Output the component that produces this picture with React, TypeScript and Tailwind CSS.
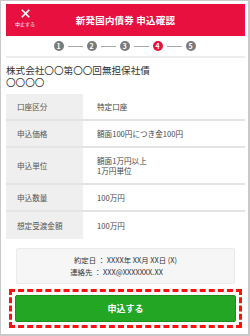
import React from 'react';

const rows: { label: string; value: string[]; tall?: boolean }[] = [
  { label: '口座区分', value: ['特定口座'] },
  { label: '申込価格', value: ['額面100円につき金100円'] },
  { label: '申込単位', value: ['額面1万円以上', '1万円単位'], tall: true },
  { label: '申込数量', value: ['100万円'] },
  { label: '想定受渡金額', value: ['100万円'] },
];

const steps = [1, 2, 3, 4, 5];

export default function App() {
  return (
    <div
      className="w-[250px] h-[336px] bg-white border-l border-t border-r-2 border-b-2 border-[#c9c9c9] pl-[5px] pr-[3px] pt-[3px] overflow-hidden"
      style={{ fontFamily: '"Noto Sans CJK JP", "Noto Sans", sans-serif' }}
    >
      {/* header */}
      <div className="relative h-[32px] bg-[#e8103f] flex items-center justify-center">
        <div className="absolute left-[9px] top-[5px] w-[20px] flex flex-col items-center text-white">
          <svg width="9" height="9" viewBox="0 0 10 10" className="block">
            <path d="M1.5 1.5 L8.5 8.5 M8.5 1.5 L1.5 8.5" stroke="white" strokeWidth="1.8" strokeLinecap="square" />
          </svg>
          <span className="mt-[3px] text-[5px] leading-[6px] whitespace-nowrap">中止する</span>
        </div>
        <span className="text-white text-[9.5px] font-bold tracking-[0.2px]">新発国内債券 申込確認</span>
      </div>

      {/* steps */}
      <div className="h-[20px] flex items-center justify-center pr-[2px]">
        {steps.map((n, i) => (
          <React.Fragment key={n}>
            {i > 0 && <div className="w-[15px] h-px bg-[#a8a8a8] mx-[4px]" />}
            <div
              className={`w-[10px] h-[10px] rounded-full flex items-center justify-center text-white text-[7px] font-bold leading-none ${
                n === 4 ? 'bg-[#e8103f]' : 'bg-[#7a7a7a]'
              }`}
            >
              {n}
            </div>
          </React.Fragment>
        ))}
      </div>
      <div className="h-[2px] bg-[#eeeeee]" />

      {/* title */}
      <div className="pt-[6px] pb-[6px] text-[#333] text-[9.6px] leading-[12px]">
        <div>株式会社〇〇第〇〇回無担保社債</div>
        <div>〇〇〇〇</div>
      </div>

      {/* table */}
      <div className="flex flex-col">
        {rows.map((r, i) => (
          <div
            key={r.label}
            className={`flex ${r.tall ? 'h-[37px]' : 'h-[27px]'} ${i < rows.length - 1 ? 'border-b-2 border-[#e4e4e4]' : ''}`}
          >
            <div className="w-[77px] bg-[#efefef] flex items-center pl-[11px] text-[7.6px] text-[#555]">{r.label}</div>
            <div className="flex-1 flex flex-col justify-center pl-[14px] text-[7.6px] leading-[10px] text-[#444]">
              {r.value.map((v) => (
                <div key={v}>{v}</div>
              ))}
            </div>
          </div>
        ))}
      </div>

      {/* info box */}
      <div className="mt-[9px] mx-[10px] h-[36px] bg-[#f6f6f6] border border-[#ebebeb] rounded-[2px] flex flex-col items-center justify-center text-[7.4px] leading-[12px] text-[#333]">
        <div>約定日 ： XXXX年 XX月 XX日 (X)</div>
        <div className="pr-[18px]">連絡先 ： XXX@XXXXXXX.XX</div>
      </div>

      {/* button */}
      <div className="mt-[5px] mx-[3px] border-[3px] border-dashed border-[#ff1010] p-[3px]">
        <div className="h-[27px] bg-[#23a623] border border-[#1d8f1d] rounded-[2px] flex items-center justify-center text-white text-[9px] font-bold">
          申込する
        </div>
      </div>
    </div>
  );
}
